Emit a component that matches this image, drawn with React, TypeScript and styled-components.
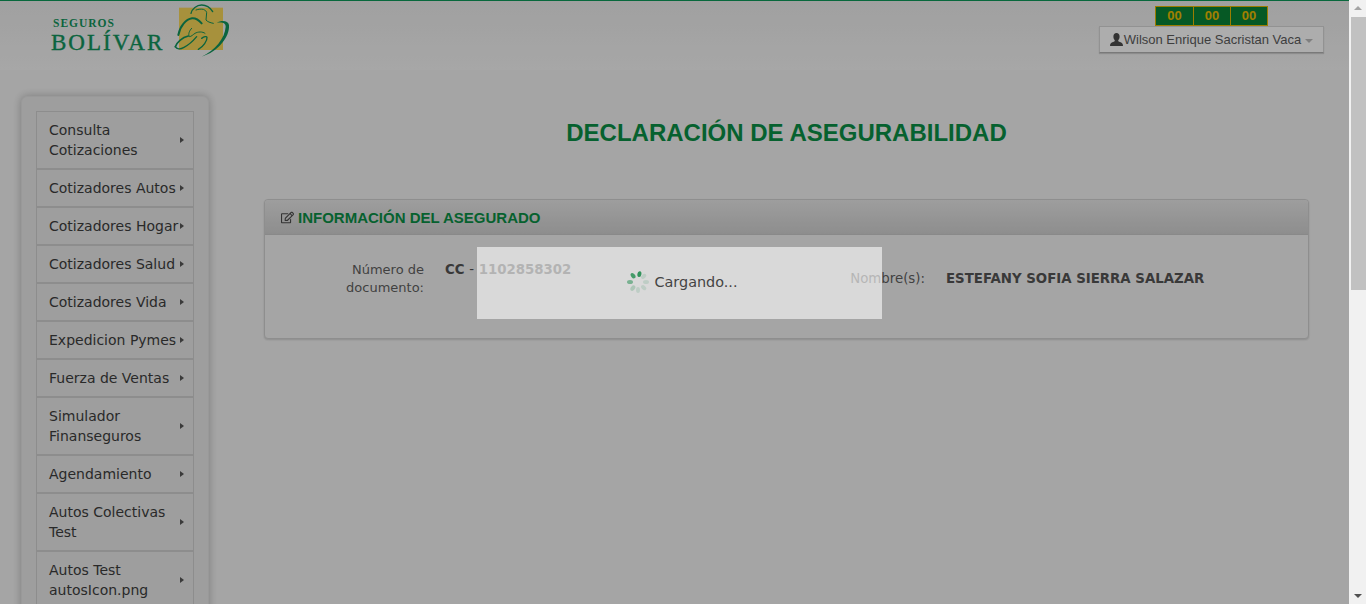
import React from "react";
import styled, { createGlobalStyle } from "styled-components";
import { FaRegEdit } from "react-icons/fa";

const Global = createGlobalStyle`
  html, body { margin: 0; padding: 0; height: 100%; overflow: hidden; background: #ededed; }
  #root { height: 100%; }
  * { box-sizing: border-box; }
`;

const Shell = styled.div`
  display: flex;
  width: 1366px;
  height: 604px;
  overflow: hidden;
`;

const Page = styled.div`
  position: relative;
  flex: 1;
  height: 604px;
  overflow: hidden;
  background: #ededed;
  font-family: "DejaVu Sans", sans-serif;
`;

const Header = styled.header`
  height: 70px;
  border-top: 1px solid #0c9656;
  background: linear-gradient(#e6e6e6, #efefef);
  display: flex;
  justify-content: space-between;
  padding-right: 25px;
`;

const Logo = styled.div`
  display: flex;
  padding-left: 51px;
`;

const LogoWords = styled.div`
  display: flex;
  flex-direction: column;
  padding-top: 16px;
  color: #11905a;
  font-family: "Liberation Serif", serif;
  width: 123px;
`;

const LogoSmall = styled.span`
  font-size: 11.5px;
  line-height: 13px;
  font-weight: 700;
  letter-spacing: 1px;
  padding-left: 2px;
`;

const LogoBig = styled.span`
  font-size: 23px;
  line-height: 26px;
  font-weight: 400;
  letter-spacing: 2px;
  -webkit-text-stroke: 0.4px #11905a;
`;

const Emblem = styled.svg`
  width: 62px;
  height: 58px;
  margin-top: 3px;
`;

const Account = styled.div`
  display: flex;
  flex-direction: column;
  align-items: center;
  padding-top: 5px;
  font-family: "Liberation Sans", Arial, sans-serif;
`;

const Timer = styled.div`
  display: flex;
  height: 20px;
  background: #0a8035;
  border: 1px solid #e0b400;
`;

const TimerCell = styled.span`
  width: 37px;
  text-align: center;
  color: #e6b800;
  font-weight: 700;
  font-size: 13px;
  line-height: 18px;
  & + & { border-left: 1px solid #e0b400; }
`;

const UserButton = styled.div`
  width: 225px;
  height: 27px;
  display: flex;
  align-items: center;
  justify-content: center;
  gap: 1px;
  background: #f8f8f8;
  border: 1px solid #d2d2d2;
  border-bottom: 1px solid #aeaeae;
  box-shadow: 0 1px 1px rgba(0,0,0,.15);
  color: #5a5a5a;
  font-size: 13px;
`;

const UserIcon = styled.svg`
  width: 13px;
  height: 13px;
  fill: #494949;
`;

const Caret = styled.i`
  display: inline-block;
  margin-left: 3px;
  margin-top: 2px;
  border-left: 4px solid transparent;
  border-right: 4px solid transparent;
  border-top: 4px solid #b7b7b7;
`;

const Body = styled.div`
  display: flex;
  padding: 26px 40px 0 21px;
`;

const Side = styled.nav`
  width: 188px;
  flex: none;
  padding: 14px;
  background: #e2e2e2;
  border: 1px solid #dcdcdc;
  border-radius: 6px;
  box-shadow: 0 0 8px rgba(0,0,0,.25);
`;

const MenuItem = styled.div`
  display: flex;
  align-items: center;
  justify-content: space-between;
  background: #e2e2e2;
  border: 1px solid #cbcbcb;
  padding: 8px 9px 8px 12px;
  color: #3c3c3c;
  font-size: 14px;
  line-height: 20px;
`;

const MenuLabel = styled.span`
  flex: 1;
`;

const Arrow = styled.i`
  flex: none;
  border-top: 3.5px solid transparent;
  border-bottom: 3.5px solid transparent;
  border-left: 4px solid #535353;
`;

const Content = styled.main`
  flex: 1;
  margin-left: 55px;
`;

const Title = styled.h1`
  margin: 22px 0 51px;
  text-align: center;
  color: #0a8c44;
  font: 700 24px/30px "Liberation Sans", Arial, sans-serif;
`;

const Card = styled.section`
  background: #ededed;
  border: 1px solid #cccccc;
  border-radius: 4px;
  box-shadow: 0 1px 2px rgba(0,0,0,.15);
  height: 140px;
`;

const CardHead = styled.div`
  height: 35px;
  display: flex;
  align-items: center;
  gap: 4px;
  padding-left: 16px;
  border-bottom: 1px solid #c5c5c5;
  border-radius: 4px 4px 0 0;
  background: linear-gradient(#e2e2e2, #cbcbcb);
  color: #0a8c44;
  font: 700 15px "Liberation Sans", Arial, sans-serif;
  svg { color: #494949; }
`;

const Grid = styled.div`
  display: grid;
  grid-template-columns: 143px 316px 143px 1fr;
  column-gap: 21px;
  padding: 26px 16px 0;
  line-height: 18px;
`;

const Label = styled.div<{ $low?: boolean }>`
  text-align: right;
  color: #5e5e5e;
  font-size: ${(p) => (p.$low ? "13.33px" : "13px")};
  padding-top: ${(p) => (p.$low ? "9px" : "0")};
`;

const Value = styled.div<{ $low?: boolean }>`
  color: #525252;
  font-size: 13.33px;
  font-weight: 700;
  padding-top: ${(p) => (p.$low ? "9px" : "0")};
`;

const Dash = styled.span`
  font-weight: 400;
`;

const Shade = styled.div`
  position: absolute;
  inset: 0;
  background: rgba(0,0,0,.3);
`;

const Loader = styled.div`
  position: absolute;
  left: 477px;
  top: 247px;
  width: 405px;
  height: 72px;
  display: flex;
  align-items: center;
  justify-content: center;
  gap: 4px;
  padding: 0 0 2px 5px;
  background: rgba(244,244,244,.65);
  color: #444;
  font-size: 14.4px;
`;

const Spinner = styled.svg`
  width: 24px;
  height: 24px;
`;

const Scrollbar = styled.div`
  flex: none;
  width: 17px;
  height: 604px;
  background: #f1f1f1;
  display: flex;
  flex-direction: column;
  align-items: center;
`;

const ArrowUp = styled.i`
  margin-top: 6px;
  height: 0;
  border-left: 4px solid transparent;
  border-right: 4px solid transparent;
  border-bottom: 4px solid #a3a3a3;
`;

const Thumb = styled.div`
  margin-top: 7px;
  margin-left: 2px;
  width: 15px;
  height: 273px;
  background: #c1c1c1;
`;

const ArrowDown = styled.i`
  margin-top: auto;
  margin-bottom: 6px;
  height: 0;
  border-left: 4px solid transparent;
  border-right: 4px solid transparent;
  border-top: 4px solid #505050;
`;

const menu = [
  "Consulta Cotizaciones",
  "Cotizadores Autos",
  "Cotizadores Hogar",
  "Cotizadores Salud",
  "Cotizadores Vida",
  "Expedicion Pymes",
  "Fuerza de Ventas",
  "Simulador Finanseguros",
  "Agendamiento",
  "Autos Colectivas Test",
  "Autos Test autosIcon.png",
];

const petals = [
  { a: 10, o: 0.95 },
  { a: -38, o: 0.85 },
  { a: -90, o: 0.55 },
  { a: -140, o: 0.25 },
  { a: 180, o: 0.15 },
  { a: 135, o: 0.15 },
  { a: 90, o: 0.15 },
  { a: 45, o: 0.15 },
];

export default function App() {
  return (
    <Shell>
      <Global />
      <Page>
        <Header>
          <Logo>
            <LogoWords>
              <LogoSmall>SEGUROS</LogoSmall>
              <LogoBig>BOLÍVAR</LogoBig>
            </LogoWords>
            <Emblem viewBox="42 12 186 174">
              <rect x="57" y="23" width="132" height="127" fill="#f0d056" />
              <g fill="none" stroke="#11905a" strokeLinecap="round" strokeLinejoin="round">
                <path d="M93 40C96 26 110 15 125 15C138 15 150 22 158 35" strokeWidth="4" />
                <path d="M108 30C116 27 124 27 130 28C136 31 140 34 140 38L138 60C142 65 150 68 160 70" strokeWidth="3" />
                <path d="M125 70C116 60 104 54 96 55C78 58 60 78 55 105" strokeWidth="6" />
                <path d="M95 85C88 92 84 102 88 110C94 110 100 103 105 100C113 95 128 94 135 100" strokeWidth="3" />
                <path d="M46 140C50 128 66 112 85 108" strokeWidth="5" />
                <path d="M46 140C50 148 60 149 72 142C88 134 100 122 110 110" strokeWidth="4" />
                <path d="M125 115C132 110 140 108 141 112C142 122 130 140 115 148" strokeWidth="4" />
              </g>
              <path d="M125 170C165 150 195 115 197 80C197 70 190 66 170 68C185 60 205 62 207 75C210 110 175 155 125 170Z" fill="#11905a" />
            </Emblem>
          </Logo>
          <Account>
            <Timer>
              <TimerCell>00</TimerCell>
              <TimerCell>00</TimerCell>
              <TimerCell>00</TimerCell>
            </Timer>
            <UserButton>
              <UserIcon viewBox="0 0 13 13">
                <path d="M6.5 0C8.4 0 9.6 1.5 9.6 3.4C9.6 5 9 6.3 8.2 7.2C8.2 8.2 8.8 8.6 10 9.1C11.6 9.8 13 10.4 13 13H0C0 10.4 1.4 9.8 3 9.1C4.2 8.6 4.8 8.2 4.8 7.2C4 6.3 3.4 5 3.4 3.4C3.4 1.5 4.6 0 6.5 0Z" />
              </UserIcon>
              Wilson Enrique Sacristan Vaca
              <Caret />
            </UserButton>
          </Account>
        </Header>
        <Body>
          <Side>
            {menu.map((m) => (
              <MenuItem key={m}>
                <MenuLabel>{m}</MenuLabel>
                <Arrow />
              </MenuItem>
            ))}
          </Side>
          <Content>
            <Title>DECLARACIÓN DE ASEGURABILIDAD</Title>
            <Card>
              <CardHead>
                <FaRegEdit size={13} />
                INFORMACIÓN DEL ASEGURADO
              </CardHead>
              <Grid>
                <Label>Número de documento:</Label>
                <Value>
                  CC <Dash>-</Dash> 1102858302
                </Value>
                <Label $low>Nombre(s):</Label>
                <Value $low>ESTEFANY SOFIA SIERRA SALAZAR</Value>
              </Grid>
            </Card>
          </Content>
        </Body>
        <Shade />
        <Loader>
          <Spinner viewBox="-12 -12 24 24">
            {petals.map((p) => (
              <ellipse
                key={p.a}
                cx="0"
                cy="-8"
                rx="2"
                ry="3"
                fill="#2a8f55"
                opacity={p.o}
                transform={`rotate(${p.a})`}
              />
            ))}
          </Spinner>
          Cargando...
        </Loader>
      </Page>
      <Scrollbar>
        <ArrowUp />
        <Thumb />
        <ArrowDown />
      </Scrollbar>
    </Shell>
  );
}
